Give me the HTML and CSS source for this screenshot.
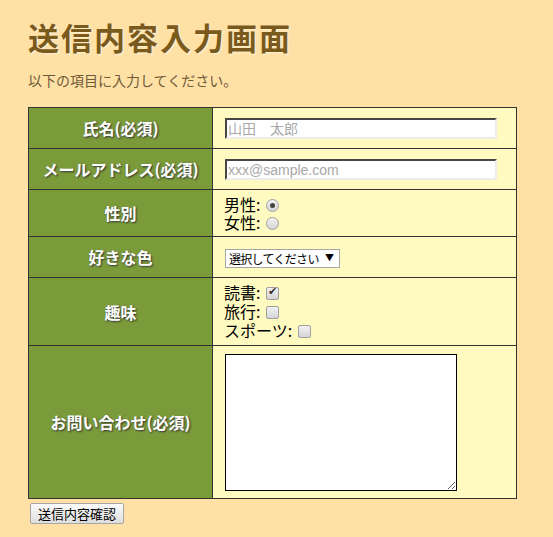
FILE: index.html
```html
<!DOCTYPE html>
<html lang="ja">
<head>
  <meta charset="UTF-8" />
  <title>送信内容入力画面</title>
  <link rel="stylesheet" href="styles.css">
</head>
<body>
  <div class="page">
    <h1 class="title">送信内容入力画面</h1>
    <p class="lead">以下の項目に入力してください。</p>

    <form class="entry-form" action="#" method="post">
      <table class="form-table">
        <tr>
          <th>氏名(必須)</th>
          <td><input type="text" class="text-box" placeholder="山田　太郎"></td>
        </tr>
        <tr>
          <th>メールアドレス(必須)</th>
          <td><input type="text" class="text-box" placeholder="xxx@sample.com"></td>
        </tr>
        <tr>
          <th>性別</th>
          <td>
            男性:<input type="radio" name="sex" class="radio" checked><br>
            女性:<input type="radio" name="sex" class="radio">
          </td>
        </tr>
        <tr>
          <th>好きな色</th>
          <td>
            <span class="select-wrap">
              <select class="select-box">
                <option>選択してください</option>
                <option>赤</option>
                <option>青</option>
                <option>緑</option>
              </select>
            </span>
          </td>
        </tr>
        <tr>
          <th>趣味</th>
          <td class="check-cell">
            読書:<input type="checkbox" class="check" checked><br>
            旅行:<input type="checkbox" class="check"><br>
            スポーツ:<input type="checkbox" class="check">
          </td>
        </tr>
        <tr>
          <th>お問い合わせ(必須)</th>
          <td><textarea class="message"></textarea></td>
        </tr>
      </table>
      <button type="submit" class="submit-btn">送信内容確認</button>
    </form>
  </div>
</body>
</html>
```

FILE: styles.css
```css
body, html {
  margin: 0; padding: 0;
  font-family: "Noto Sans CJK JP", "Liberation Sans", sans-serif;
  background: #ffe0a5;
  color: #000;
}
.page {
  padding: 0 28px;
}
.title {
  margin: 0;
  padding-top: 16px;
  font-size: 31px;
  line-height: 42px;
  letter-spacing: 2px;
  font-weight: bold;
  color: #7a5a1c;
  text-shadow: 1px 1px 2px #fff3d6;
}
.lead {
  margin: 0;
  padding-top: 12px;
  font-size: 14px;
  line-height: 20px;
  color: #6f5a38;
}
.entry-form {
  margin-top: 17px;
}
.form-table {
  width: 489px;
  border-collapse: collapse;
}
.form-table th, .form-table td {
  border: 1px solid #333;
  height: 30px;
  padding: 5px 0;
}
.form-table th {
  width: 183px;
  background: #7b9b3b;
  color: #fff;
  font-size: 16px;
  font-weight: bold;
  text-shadow: 1px 1px 2px #333;
  text-align: center;
}
.form-table td {
  background: #fffbc0;
  padding-left: 11px;
  font-size: 16px;
  line-height: 18px;
  text-align: left;
}
.form-table td.check-cell {
  line-height: 19px;
}
.text-box {
  box-sizing: border-box;
  width: 272px;
  height: 21px;
  margin: 0 0 0 1px;
  padding: 0 1px;
  border: 2px inset;
  border-color: #9a9a9a #ececec #ececec #9a9a9a;
  background: #fff;
  font-family: "Liberation Sans", "Noto Sans CJK JP", sans-serif;
  font-size: 14px;
  vertical-align: middle;
}
.text-box::placeholder {
  color: #a9a9a9;
}
.radio, .check {
  -webkit-appearance: none;
  appearance: none;
  width: 13px;
  height: 13px;
  margin: 0 3px 0 6px;
  border: 1px solid #a0a0a0;
  background: linear-gradient(#f2f2f2, #d4d4d4);
  vertical-align: -1px;
  position: relative;
}
.radio {
  border-radius: 50%;
}
.radio:checked::after {
  content: "";
  position: absolute;
  left: 3px; top: 3px;
  width: 5px; height: 5px;
  border-radius: 50%;
  background: #444;
}
.check {
  border-radius: 2px;
}
.check:checked::after {
  content: "✔";
  position: absolute;
  left: 1px; top: -3px;
  font-size: 11px;
  color: #333;
}
.select-wrap {
  position: relative;
  display: inline-block;
  margin-left: 1px;
  vertical-align: middle;
}
.select-wrap::after {
  content: "▼";
  position: absolute;
  right: 6px;
  top: 4px;
  font-size: 9px;
  line-height: 10px;
  color: #000;
  pointer-events: none;
}
.select-box {
  -webkit-appearance: none;
  appearance: none;
  box-sizing: border-box;
  display: block;
  width: 115px;
  height: 19px;
  padding: 0 0 0 3px;
  border: 1px solid #a6a6a6;
  border-radius: 0;
  background: #fff;
  font-family: "Noto Sans CJK JP", sans-serif;
  font-size: 12px;
  letter-spacing: -0.7px;
  line-height: 17px;
  color: #000;
}
.message {
  box-sizing: border-box;
  width: 232px;
  height: 137px;
  margin: 3px 0 0 1px;
  border: 1px solid #000;
  background: #fff;
}
.submit-btn {
  margin: 4px 0 0 2px;
  width: 94px;
  height: 21px;
  padding: 0;
  border: 1px solid #a6a6a6;
  border-radius: 2px;
  background: linear-gradient(#fbfbfb, #dedede);
  font-family: "Noto Sans CJK JP", sans-serif;
  font-size: 13px;
  line-height: 19px;
  color: #000;
}
```
